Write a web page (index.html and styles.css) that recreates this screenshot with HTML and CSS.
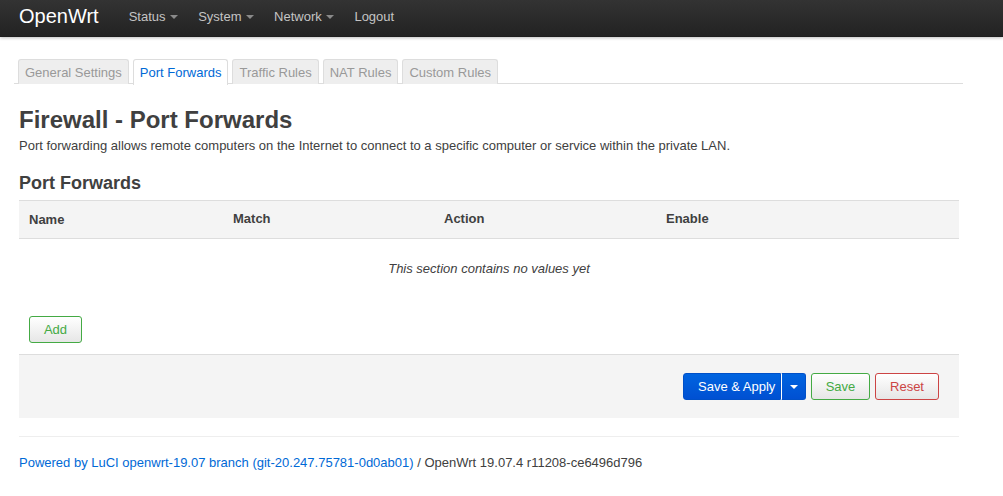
FILE: index.html
```html
<!DOCTYPE html>
<html>
<head>
<meta charset="utf-8">
<link rel="stylesheet" href="styles.css">
</head>
<body>
<header class="topbar">
  <a class="brand" href="#">OpenWrt</a>
  <ul class="nav">
    <li class="dropdown">Status <span class="caret"></span></li>
    <li class="dropdown">System <span class="caret"></span></li>
    <li class="dropdown">Network <span class="caret"></span></li>
    <li>Logout</li>
  </ul>
</header>
<main class="container">
  <ul class="tabs">
    <li class="tab">General Settings</li>
    <li class="tab active">Port Forwards</li>
    <li class="tab">Traffic Rules</li>
    <li class="tab">NAT Rules</li>
    <li class="tab">Custom Rules</li>
  </ul>
  <h2 class="title">Firewall - Port Forwards</h2>
  <p class="desc">Port forwarding allows remote computers on the Internet to connect to a specific computer or service within the private LAN.</p>
  <h3 class="section-title">Port Forwards</h3>
  <div class="table">
    <div class="thead">
      <div class="th c-name">Name</div>
      <div class="th c-match">Match</div>
      <div class="th c-action">Action</div>
      <div class="th c-enable">Enable</div>
    </div>
    <div class="empty">This section contains no values yet</div>
  </div>
  <div class="add-row"><button class="btn btn-add">Add</button></div>
  <div class="actions">
    <div class="split">
      <button class="btn-primary">Save &amp; Apply</button><button class="btn-primary drop"><span class="caret white"></span></button>
    </div>
    <button class="btn btn-save">Save</button>
    <button class="btn btn-reset">Reset</button>
  </div>
  <footer class="footer">
    <a href="#">Powered by LuCI openwrt-19.07 branch (git-20.247.75781-0d0ab01)</a> / OpenWrt 19.07.4 r11208-ce6496d796
  </footer>
</main>
</body>
</html>
```
FILE: styles.css
```css
* { box-sizing: border-box; }
html, body { margin: 0; padding: 0; background: #fff; }
body {
  font-family: "Liberation Sans", Arial, sans-serif;
  font-size: 13px;
  line-height: 18px;
  color: #404040;
}
.topbar {
  height: 37px;
  background: linear-gradient(#333, #222);
  box-shadow: 0 1px 3px rgba(0,0,0,0.25), inset 0 -1px 0 rgba(0,0,0,0.1);
  display: flex;
  align-items: center;
  padding-left: 19px;
}
.brand {
  color: #fff;
  font-size: 20px;
  text-decoration: none;
  line-height: 37px;
  margin-right: 20px;
  margin-top: -4px;
}
.nav {
  list-style: none;
  margin: 0;
  padding: 0;
  display: flex;
  margin-top: -4px;
}
.nav li {
  color: #c4c4c4;
  font-size: 13px;
  padding: 0 10px;
  line-height: 37px;
}
.caret {
  display: inline-block;
  width: 0; height: 0;
  border-left: 4px solid transparent;
  border-right: 4px solid transparent;
  border-top: 4px solid #8a8a8a;
  vertical-align: middle;
  margin-left: 1px;
  margin-top: -2px;
}
.caret.white { border-top-color: #fff; margin: 0; }
.container {
  width: 959px;
  padding-left: 19px;
}
.tabs {
  list-style: none;
  margin: 22px 0 0 -5px;
  padding: 0 0 0 4px;
  width: 949px;
  display: flex;
  gap: 4px;
  border-bottom: 1px solid #ddd;
  height: 25px;
}
.tab {
  height: 25px;
  padding: 4px 6px 0;
  border: 1px solid #ddd;
  border-bottom: none;
  border-radius: 3px 3px 0 0;
  background: #eee;
  color: #999;
  font-size: 13px;
  white-space: nowrap;
}
.tab.active {
  background: #fff;
  color: #0069d6;
  height: 26px;
}
.title {
  font-size: 24px;
  font-weight: bold;
  line-height: 26px;
  margin: 23px 0 0;
  color: #404040;
}
.desc {
  margin: 4px 0 0;
  font-size: 13px;
  line-height: 18px;
}
.section-title {
  font-size: 18px;
  font-weight: bold;
  line-height: 24px;
  margin: 16px 0 0;
}
.table {
  width: 940px;
  margin-top: 5px;
}
.thead {
  display: flex;
  height: 39px;
  background: #f4f4f4;
  border-top: 1px solid #ddd;
  border-bottom: 1px solid #ddd;
  font-weight: bold;
}
.th { padding: 9px 10px 0; }
.c-name { width: 204px; padding-top: 10px; }
.c-match { width: 211px; }
.c-action { width: 222px; }
.c-enable { flex: 1; }
.empty {
  text-align: center;
  font-style: italic;
  height: 61px;
  padding-top: 21px;
}
.add-row {
  padding: 16px 10px 10px;
}
.btn {
  font-family: "Liberation Sans", Arial, sans-serif;
  font-size: 13px;
  height: 27px;
  padding: 0 13px;
  border-radius: 3px;
  background: linear-gradient(#fff, #e6e6e6);
  cursor: pointer;
}
.btn-add { border: 1px solid #4a4; color: #4a4; width: 53px; padding: 0; }
.btn-save { border: 1px solid #4a4; color: #4a4; width: 59px; padding: 0; }
.btn-reset { border: 1px solid #c44; color: #c44; width: 64px; padding: 0; }
.actions {
  width: 940px;
  height: 64px;
  background: #f4f4f4;
  border-top: 1px solid #ddd;
  display: flex;
  justify-content: flex-end;
  align-items: center;
  gap: 5px;
  padding-right: 20px;
  padding-bottom: 1px;
  margin-top: 1px;
}
.split { display: flex; }
.btn-primary {
  font-family: "Liberation Sans", Arial, sans-serif;
  font-size: 13px;
  height: 27px;
  color: #fff;
  border: 1px solid #0050c8;
  background: linear-gradient(#0064e0, #0050d2);
  padding: 0 4px 0 14px;
  border-radius: 3px 0 0 3px;
  width: 98px;
  text-align: left;
  white-space: nowrap;
}
.btn-primary.drop {
  width: 25px;
  padding: 0;
  text-align: center;
  border-left: 1px solid #fff;
  border-radius: 0 3px 3px 0;
}
.footer {
  margin-top: 18px;
  width: 940px;
  border-top: 1px solid #eee;
  padding-top: 17px;
  font-size: 13px;
}
.footer a { color: #0069d6; text-decoration: none; }
```
